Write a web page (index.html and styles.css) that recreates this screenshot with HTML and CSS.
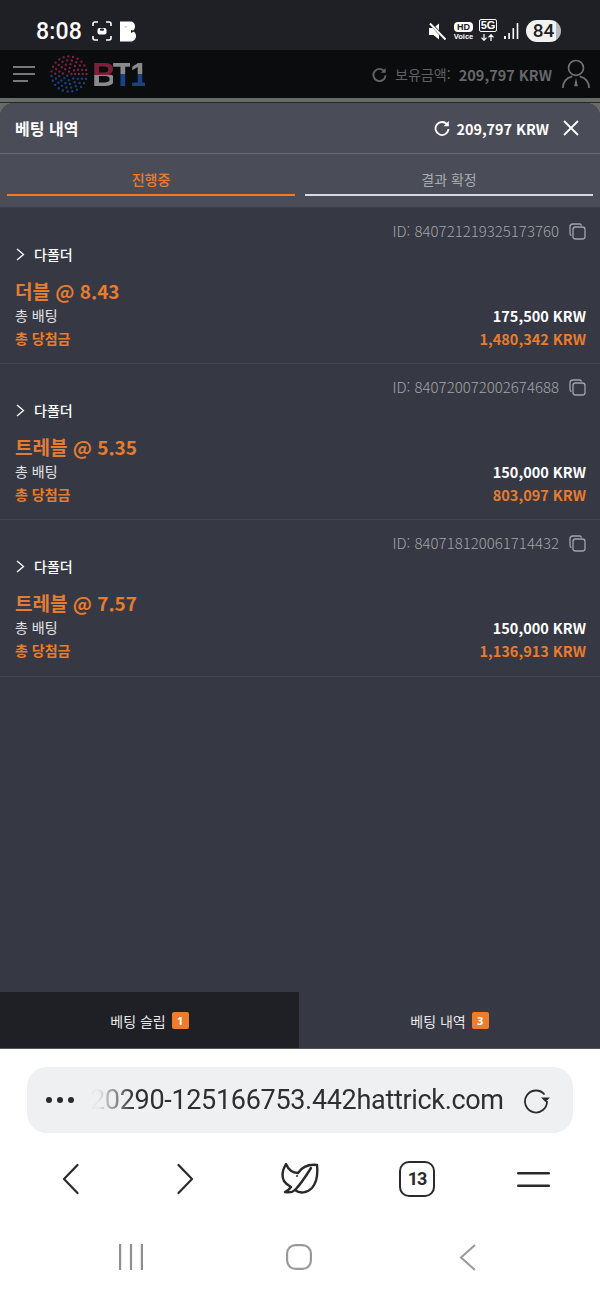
FILE: index.html
```html
<!DOCTYPE html>
<html lang="ko">
<head>
<meta charset="utf-8">
<title>베팅 내역</title>
<link rel="stylesheet" href="styles.css">
</head>
<body>
<div class="app">
  <div class="status">
    <span class="time">8:08</span>
    <svg class="st-capture" viewBox="0 0 20 20" fill="none" stroke="#fff" stroke-width="1.6"><path d="M1 5V3a2 2 0 0 1 2-2h3M14 1h3a2 2 0 0 1 2 2v2M19 15v2a2 2 0 0 1-2 2h-3M6 19H3a2 2 0 0 1-2-2v-2"/><rect x="5.500" y="7" width="9" height="6.500" rx="2" fill="#fff" stroke="none"/><rect x="8" y="7.500" width="4" height="2.200" rx="1" fill="#1f2026" stroke="none"/></svg>
    <svg class="st-b" viewBox="0 0 16 20"><path d="M0 0h10c3 0 5 2 5 4.800 0 2-1 3.700-2 4.700 1.800 1 3 2.700 3 5 0 3.500-2.500 5.500-6 5.500H0z" fill="#fff"/><path d="M15 9.500L11 8.500v3z" fill="#1f2026"/><path d="M4.500 4.500h2v1.500h-2z" fill="#c9c9c9"/></svg>
    <span class="st-spacer"></span>
    <svg class="st-mute" viewBox="0 0 17 17"><path d="M0 5h4.500L10 .5v16L4.500 12H0z" fill="#fff"/><path d="M1 0l15.500 16.500" stroke="#1f2026" stroke-width="3"/><path d="M1 .5l15.500 16" stroke="#fff" stroke-width="2"/></svg>
    <span class="st-hd"><b>HD</b><i>Voice</i></span>
    <span class="st-5g"><b>5G</b><svg viewBox="0 0 16 7" fill="none" stroke="#fff" stroke-width="1.200"><path d="M4 0v6M1.500 3.700L4 6.300l2.500-2.600M11 7V1M8.500 3.300L11 .7l2.500 2.600"/></svg></span>
    <svg class="st-signal" viewBox="0 0 15 16" fill="#fff"><rect x="0" y="13" width="2" height="3"/><rect x="4.300" y="10" width="1.600" height="6"/><rect x="8.500" y="5" width="1.600" height="11"/><rect x="12.700" y="0" width="1.600" height="16"/></svg>
    <span class="st-batt">84</span>
  </div>

  <header class="site">
    <svg class="ham" viewBox="0 0 22 16" fill="#77787a"><rect x="0" y="0" width="22" height="2"/><rect x="0" y="7" width="22" height="2"/><rect x="0" y="14" width="15" height="2"/></svg>
    <svg class="globe" viewBox="0 0 40 40" fill="none" stroke-linecap="round" stroke-width="2.500">
      <defs><linearGradient id="rb" gradientUnits="userSpaceOnUse" x1="0" y1="0" x2="0" y2="40"><stop offset="0.52" stop-color="#7d2140"/><stop offset="0.52" stop-color="#1b3f85"/></linearGradient></defs>
      <circle cx="20" cy="20" r="2.500" stroke="url(#rb)" stroke-dasharray="0 5.240"/>
      <circle cx="20" cy="20" r="6.500" stroke="url(#rb)" stroke-dasharray="0 5.105"/>
      <circle cx="20" cy="20" r="10.500" stroke="url(#rb)" stroke-dasharray="0 5.075"/>
      <circle cx="20" cy="20" r="14.500" stroke="url(#rb)" stroke-dasharray="0 5.062"/>
      <circle cx="20" cy="20" r="18.500" stroke="url(#rb)" stroke-dasharray="0 5.054"/>
    </svg>
    <span class="logo"><span class="l-b">B</span><span class="l-t">T</span><span class="l-1">1</span></span>
    <span class="st-spacer"></span>
    <svg class="site-refresh" viewBox="0 0 16 16" fill="none" stroke="#636468" stroke-width="2"><path d="M13.500 5A6.500 6.500 0 1 0 14.500 9"/><path d="M14.500 1v5h-5" fill="#636468" stroke="none"/></svg>
    <span class="bal-label">보유금액:</span>
    <span class="bal-val">209,797 KRW</span>
    <svg class="user" viewBox="0 0 30 32" fill="none" stroke="#707174" stroke-width="1.800"><circle cx="15" cy="9.500" r="8"/><path d="M1 31c0-7 4.500-11 10-12.500M29 31c0-7-4.500-11-10-12.500"/><path d="M15 20l2 9h-4z" fill="#707174" stroke="none"/></svg>
  </header>

  <main class="stage">
    <section class="panel">
      <div class="panel-head">
        <h1 class="panel-title">베팅 내역</h1>
        <span class="st-spacer"></span>
        <svg class="panel-refresh" viewBox="0 0 16 16" fill="none" stroke="#fff" stroke-width="1.800"><path d="M13.500 5A6.500 6.500 0 1 0 14.500 9"/><path d="M14.800 1v5.200H9.600" fill="#fff" stroke="none"/></svg>
        <span class="panel-bal">209,797 KRW</span>
        <svg class="panel-close" viewBox="0 0 16 16" stroke="#fff" stroke-width="1.800"><path d="M1 1l14 14M15 1L1 15"/></svg>
      </div>
      <div class="tabs">
        <div class="tab tab-on">진행중</div>
        <div class="tab">결과 확정</div>
      </div>
      <div class="list">
        <article class="bet">
          <div class="bet-id"><span>ID: 840721219325173760</span><svg class="copy" viewBox="0 0 17 17" fill="none" stroke="#a3a4a9" stroke-width="1.300"><path d="M2.500 12.500A2 2 0 0 1 1 10.500V4a3 3 0 0 1 3-3h6.500a2 2 0 0 1 2 1.500"/><rect x="4" y="4" width="12" height="12" rx="2.500"/></svg></div>
          <div class="bet-type"><svg class="chev" viewBox="0 0 9 13" fill="none" stroke="#fff" stroke-width="1.300"><path d="M1 1l6.500 5.500L1 12"/></svg><span>다폴더</span></div>
          <div class="bet-title">더블 @ 8.43</div>
          <div class="bet-row"><span>총 배팅</span><b>175,500 KRW</b></div>
          <div class="bet-row bet-win"><span>총 당첨금</span><b>1,480,342 KRW</b></div>
        </article>
        <article class="bet">
          <div class="bet-id"><span>ID: 840720072002674688</span><svg class="copy" viewBox="0 0 17 17" fill="none" stroke="#a3a4a9" stroke-width="1.300"><path d="M2.500 12.500A2 2 0 0 1 1 10.500V4a3 3 0 0 1 3-3h6.500a2 2 0 0 1 2 1.500"/><rect x="4" y="4" width="12" height="12" rx="2.500"/></svg></div>
          <div class="bet-type"><svg class="chev" viewBox="0 0 9 13" fill="none" stroke="#fff" stroke-width="1.300"><path d="M1 1l6.500 5.500L1 12"/></svg><span>다폴더</span></div>
          <div class="bet-title">트레블 @ 5.35</div>
          <div class="bet-row"><span>총 배팅</span><b>150,000 KRW</b></div>
          <div class="bet-row bet-win"><span>총 당첨금</span><b>803,097 KRW</b></div>
        </article>
        <article class="bet">
          <div class="bet-id"><span>ID: 840718120061714432</span><svg class="copy" viewBox="0 0 17 17" fill="none" stroke="#a3a4a9" stroke-width="1.300"><path d="M2.500 12.500A2 2 0 0 1 1 10.500V4a3 3 0 0 1 3-3h6.500a2 2 0 0 1 2 1.500"/><rect x="4" y="4" width="12" height="12" rx="2.500"/></svg></div>
          <div class="bet-type"><svg class="chev" viewBox="0 0 9 13" fill="none" stroke="#fff" stroke-width="1.300"><path d="M1 1l6.500 5.500L1 12"/></svg><span>다폴더</span></div>
          <div class="bet-title">트레블 @ 7.57</div>
          <div class="bet-row"><span>총 배팅</span><b>150,000 KRW</b></div>
          <div class="bet-row bet-win"><span>총 당첨금</span><b>1,136,913 KRW</b></div>
        </article>
      </div>
      <div class="bottom-tabs">
        <div class="btab btab-dark">베팅 슬립 <span class="badge">1</span></div>
        <div class="btab">베팅 내역 <span class="badge">3</span></div>
      </div>
    </section>
  </main>

  <div class="browser">
    <div class="urlbar">
      <span class="dots"><i></i><i></i><i></i></span>
      <span class="url">20290-125166753.442hattrick.com</span>
      <svg class="reload" viewBox="0 0 28 28" fill="none" stroke="#2a2a2c" stroke-width="1.800"><path d="M21.500 8.500A11 11 0 1 0 24 15"/><path d="M18 11.500h9L22.500 16z" fill="#2a2a2c" stroke="none"/></svg>
    </div>
    <nav class="bnav">
      <svg class="b-chev" viewBox="0 0 17 32" fill="none" stroke="#2a2a2c" stroke-width="2.200" stroke-linecap="round" stroke-linejoin="round"><path d="M15.500 2L2 16l13.500 14"/></svg>
      <svg class="b-chev" viewBox="0 0 17 32" fill="none" stroke="#2a2a2c" stroke-width="2.200" stroke-linecap="round" stroke-linejoin="round"><path d="M1.500 2L15 16 1.500 30"/></svg>
      <svg class="b-leaf" viewBox="0 0 38 32" fill="none" stroke="#2a2a2c" stroke-width="2.400" stroke-linecap="round" stroke-linejoin="round"><path d="M5 1C2 6 0 12 3 18c2 3 5 5 7 6-2 3-4 4-6 5 5 1 8 0 10-2 5 4 12 3 17-2 5-6 6-14 5-23-9-1-15 2-19 8C13 10 8 8 5 1z"/><path d="M14 27C19 22 25 13 30 5"/><circle cx="16" cy="13" r="1" fill="#2a2a2c" stroke="none"/></svg>
      <span class="b-tabs">13</span>
      <svg class="b-menu" viewBox="0 0 33 15" fill="#2a2a2c"><rect width="33" height="2.400" rx="1.200"/><rect y="12.600" width="33" height="2.400" rx="1.200"/></svg>
    </nav>
    <nav class="sysnav">
      <svg class="s-lines" viewBox="0 0 24 26" fill="#8f8f8f"><rect width="2.200" height="26"/><rect x="10.900" width="2.200" height="26"/><rect x="21.800" width="2.200" height="26"/></svg>
      <svg class="s-home" viewBox="0 0 26 26" fill="none" stroke="#999" stroke-width="2.200"><rect x="1.100" y="1.100" width="23.800" height="23.800" rx="8.500"/></svg>
      <svg class="s-back" viewBox="0 0 17 27" fill="none" stroke="#999" stroke-width="2"><path d="M16 1L2 13.500 16 26"/></svg>
    </nav>
  </div>
</div>
</body>
</html>
```
FILE: styles.css
```css
* { box-sizing: border-box; }
html, body { margin: 0; padding: 0; }
body {
  width: 600px;
  height: 1300px;
  overflow: hidden;
  background: #fff;
  font-family: "Noto Sans CJK KR", "Noto Sans", sans-serif;
}
.app { display: flex; flex-direction: column; height: 1300px; }
.st-spacer { flex: 1; }

/* status bar */
.status {
  height: 50px;
  flex: none;
  background: #1f2026;
  display: flex;
  align-items: center;
  padding: 12px 39px 0 36px;
}
.time { font: 500 23px/1 Roboto, sans-serif; color: #fff; letter-spacing: .2px; width: 56px; }
.st-capture { width: 20px; height: 20px; margin-right: 8px; }
.st-b { width: 16px; height: 21px; }
.st-mute { width: 17px; height: 17px; margin-right: 8px; }
.st-hd { width: 19px; margin-right: 6px; display: flex; flex-direction: column; align-items: center; color: #fff; }
.st-hd b { font: 700 9px/10px "Liberation Sans", sans-serif; background: #fff; color: #1f2026; border-radius: 4px; width: 19px; text-align: center; }
.st-hd i { font: 700 7.500px/9px "Liberation Sans", sans-serif; }
.st-5g { width: 18px; margin: -2px 7px 0 0; display: flex; flex-direction: column; align-items: center; }
.st-5g b { font: 700 11px/12px "Liberation Sans", sans-serif; color: #fff; border: 1px solid #fff; border-radius: 2px; width: 18px; text-align: center; height: 13px; line-height: 11px; }
.st-5g svg { width: 16px; height: 7px; margin-top: 2px; }
.st-signal { width: 15px; height: 16px; margin-right: 7px; }
.st-batt {
  width: 35px; height: 22px; border-radius: 11px;
  background: linear-gradient(90deg, #f2f2f2 0 86%, #b9b9bb 86%);
  color: #222;
  font: 500 19px/22px Roboto, sans-serif;
  text-align: center;
}

/* site header */
.site {
  height: 48px;
  flex: none;
  background: #0b0c0e;
  display: flex;
  align-items: center;
  padding: 0 10px 0 13px;
}
.ham { width: 22px; height: 16px; margin-right: 15px; }
.globe { width: 38px; height: 38px; margin-right: 4px; }
.logo { font: 900 33px/1 "Liberation Sans", sans-serif; letter-spacing: -3px; display: flex; }
.l-b, .l-t, .l-1 { -webkit-background-clip: text; background-clip: text; color: transparent; }
.l-b { background-image: linear-gradient(#7b2038 0 52%, #8a8a8c 52%); }
.l-t { background-image: linear-gradient(#8a8a8c 0 50%, #1c4186 50%); }
.l-1 { background-image: linear-gradient(#8a8a8c 0 50%, #1c4186 50%); }
.site-refresh { width: 15px; height: 15px; margin-right: 8px; }
.bal-label { font-size: 14.100px; color: #5f6064; margin-right: 8px; }
.bal-val { font-size: 14.500px; font-weight: 700; color: #66676b; margin-right: 10px; }
.user { width: 28px; height: 30px; }

/* stage & panel */
.stage {
  flex: 1;
  display: flex;
  flex-direction: column;
  padding-top: 5px;
  background: linear-gradient(#6a6b67 0 4px, #1d2c22 4px 5px, #6a6b67 5px);
}
.panel { flex: 1; display: flex; flex-direction: column; background: #363844; border-radius: 14px 14px 0 0; overflow: hidden; }
.panel-head {
  height: 51px;
  flex: none;
  display: flex;
  align-items: center;
  background: #4a4d57;
  border-bottom: 1px solid #656870;
  padding: 0 21px 0 15px;
}
.panel-title { margin: 0; font-size: 16px; font-weight: 700; color: #fff; }
.panel-refresh { width: 16px; height: 16px; margin-right: 6px; }
.panel-bal { font-size: 14.400px; font-weight: 700; color: #fff; margin-right: 14px; }
.panel-close { width: 16px; height: 16px; }
.tabs {
  height: 54px;
  flex: none;
  display: flex;
  gap: 10px;
  padding: 0 7px 11px;
  background: #4a4d57;
  border-bottom: 1px solid #3d3f4a;
}
.tab {
  flex: 1;
  text-align: center;
  font-size: 14px;
  line-height: 20px;
  padding-top: 15px;
  color: #a9abb0;
  border-bottom: 2px solid #d8d9da;
}
.tab-on { color: #ea7c2c; font-weight: 500; border-bottom-color: #ea7c2c; }

.list { flex: 1; }
.bet {
  height: 156px;
  padding: 10px 14px 0 15px;
  border-bottom: 1px solid #45474f;
}
.bet:last-child { height: 157px; }
.bet-id {
  display: flex; justify-content: flex-end; align-items: center; gap: 10px;
  height: 24px;
  font-size: 15px; font-weight: 300; color: #a3a4a9;
}
.copy { width: 17px; height: 17px; margin-top: 2px; }
.bet-type {
  display: flex; align-items: center; gap: 9px;
  height: 24px;
  font-size: 14px; font-weight: 500; color: #fff;
}
.chev { width: 9px; height: 13px; margin-left: 1px; }
.bet-title { margin-top: 12px; height: 26px; font-size: 19px; line-height: 26px; font-weight: 700; color: #e67c2e; }
.bet-row {
  display: flex; justify-content: space-between; align-items: center;
  height: 24px; font-size: 14px; color: #e4e4e6;
}
.bet-row b { color: #fff; font-weight: 700; font-size: 14.500px; }
.bet-win { margin-top: -1px; }
.bet-win span { color: #e67c2e; font-weight: 700; }
.bet-win b { color: #e67c2e; }
.bet-title + .bet-row { margin-top: -1px; }

.bottom-tabs { height: 57px; flex: none; display: flex; border-bottom: 1px solid #55575f; }
.btab {
  flex: 1;
  display: flex; align-items: center; justify-content: center; gap: 6px;
  font-size: 14px; color: #e8e8ea;
  padding-top: 1px;
}
.btab-dark { flex: 0 0 299px; background: #1f2026; }
.badge {
  width: 17px; height: 17px; border-radius: 2px;
  background: #ee7c2b; color: #fff;
  font: 700 11px/17px "Noto Sans", sans-serif;
  text-align: center;
}

/* browser chrome */
.browser { flex: none; height: 251px; background: #fff; display: flex; flex-direction: column; }
.urlbar {
  height: 66px;
  margin: 18px 27px 0;
  flex: none;
  background: #eff0f2;
  border-radius: 20px;
  display: flex;
  align-items: center;
  padding: 0 21px 0 19px;
}
.dots { display: flex; gap: 5px; width: 44px; flex: none; }
.dots i { width: 6px; height: 6px; border-radius: 50%; background: #2a2a2c; }
.url {
  flex: none;
  width: 416px;
  font: 400 27px/36px Roboto, sans-serif;
  letter-spacing: -.32px;
  color: #2f2f31;
  white-space: nowrap;
  -webkit-mask-image: linear-gradient(90deg, rgba(0,0,0,.03) 8px, #000 44px);
  mask-image: linear-gradient(90deg, rgba(0,0,0,.03) 8px, #000 44px);
}
.reload { width: 28px; height: 28px; margin-left: 17px; }
.bnav {
  height: 78px;
  margin-top: 7px;
  flex: none;
  padding: 0 12px;
  display: grid;
  grid-template-columns: 116px 114px 115px 120px 113px;
  justify-items: center;
  align-items: center;
}
.b-chev { width: 17px; height: 32px; }
.b-leaf { width: 38px; height: 32px; }
.b-tabs {
  width: 36px; height: 36px;
  border: 2.500px solid #2a2a2c;
  border-radius: 10px;
  font: 700 18px/31px "Roboto", sans-serif;
  letter-spacing: -1px;
  color: #2a2a2c;
  text-align: center;
}
.b-menu { width: 33px; height: 15px; }
.sysnav { flex: 1; display: grid; grid-template-columns: 119px 24px 143px 26px 147px 17px; align-items: center; padding-bottom: 4px; }
.s-lines { grid-column: 2; width: 24px; height: 26px; }
.s-home { grid-column: 4; width: 26px; height: 26px; }
.s-back { grid-column: 6; width: 17px; height: 27px; }
```
